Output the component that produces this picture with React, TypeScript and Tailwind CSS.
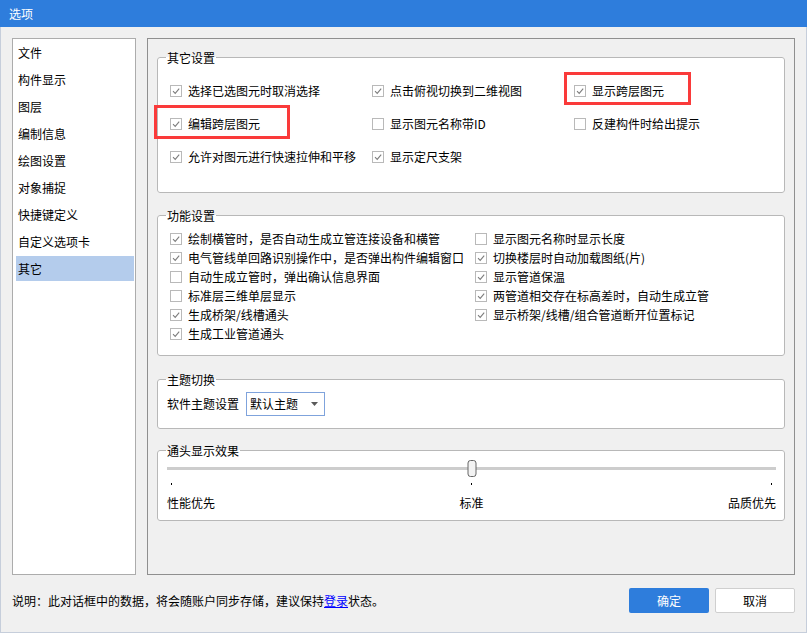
import type { ReactNode } from "react";

const FONT = "font-['Noto_Sans_CJK_SC','Noto_Sans',sans-serif]";

const navItems = [
  "文件",
  "构件显示",
  "图层",
  "编制信息",
  "绘图设置",
  "对象捕捉",
  "快捷键定义",
  "自定义选项卡",
  "其它",
];

type Opt = { label: string; checked: boolean } | null;

const otherRows: Opt[][] = [
  [
    { label: "选择已选图元时取消选择", checked: true },
    { label: "点击俯视切换到二维视图", checked: true },
    { label: "显示跨层图元", checked: true },
  ],
  [
    { label: "编辑跨层图元", checked: true },
    { label: "显示图元名称带ID", checked: false },
    { label: "反建构件时给出提示", checked: false },
  ],
  [
    { label: "允许对图元进行快速拉伸和平移", checked: true },
    { label: "显示定尺支架", checked: true },
    null,
  ],
];

const funcLeft = [
  { label: "绘制横管时，是否自动生成立管连接设备和横管", checked: true },
  { label: "电气管线单回路识别操作中，是否弹出构件编辑窗口", checked: true },
  { label: "自动生成立管时，弹出确认信息界面", checked: false },
  { label: "标准层三维单层显示", checked: false },
  { label: "生成桥架/线槽通头", checked: true },
  { label: "生成工业管道通头", checked: true },
];

const funcRight = [
  { label: "显示图元名称时显示长度", checked: false },
  { label: "切换楼层时自动加载图纸(片)", checked: true },
  { label: "显示管道保温", checked: true },
  { label: "两管道相交存在标高差时，自动生成立管", checked: true },
  { label: "显示桥架/线槽/组合管道断开位置标记", checked: true },
];

// Small windows-style checkbox
const CheckBox = ({ label, checked }: { label: string; checked: boolean }) => (
  <div className="flex items-center gap-[6px] whitespace-nowrap">
    <span className="flex h-[12px] w-[12px] shrink-0 items-center justify-center border border-[#b9b9b9] bg-white">
      {checked && (
        <svg width="10" height="10" viewBox="0 0 10 10">
          <path d="M2 5.2 L4.2 7.4 L8.2 2.6" fill="none" stroke="#7d7d7d" strokeWidth="1.1" />
        </svg>
      )}
    </span>
    <span>{label}</span>
  </div>
);

const GroupBox = ({
  title,
  className,
  children,
}: {
  title: string;
  className?: string;
  children: ReactNode;
}) => (
  <fieldset className={`rounded-[3px] border border-[#b8b8b8] bg-white ${className ?? ""}`}>
    <legend className="ml-[8px] px-[1px] leading-[17px]">{title}</legend>
    {children}
  </fieldset>
);

export default function App() {
  return (
    <div className={`relative flex h-[633px] w-[807px] flex-col bg-[#f0f0f0] text-[12px] text-black ${FONT}`}>
      {/* Title bar */}
      <div className="flex h-[27px] shrink-0 items-center bg-[#2e7ddc] pl-[9px] text-[12px] text-white">
        选项
      </div>

      {/* Body */}
      <div className="flex flex-1 flex-col border-x border-b border-[#c6cedb]">
        <div className="flex gap-[11px] px-[11px] pt-[11px]">
          {/* Sidebar */}
          <div className="flex h-[537px] w-[124px] flex-col gap-[2px] border border-[#acacac] bg-white pl-[3px] pr-[1px] pt-[1px]">
            {navItems.map((item) => (
              <div
                key={item}
                className={`flex h-[25px] items-center pl-[2px] ${item === "其它" ? "bg-[#b4ccec]" : ""}`}
              >
                {item}
              </div>
            ))}
          </div>

          {/* Main panel */}
          <div className="flex h-[537px] w-[648px] flex-col border border-[#8f8f8f] px-[9px] pt-[10px]">
            <GroupBox title="其它设置" className="pb-[25px]">
              <div className="flex flex-col gap-[13px] pl-[12px] pt-[15px]">
                {otherRows.map((row, i) => (
                  <div key={i} className="grid h-[20px] grid-cols-[202px_202px_1fr] items-center">
                    {row.map((opt, j) =>
                      opt ? <CheckBox key={j} label={opt.label} checked={opt.checked} /> : <div key={j} />
                    )}
                  </div>
                ))}
              </div>
            </GroupBox>

            <GroupBox title="功能设置" className="mt-[14px] pb-[12px]">
              <div className="flex pl-[12px] pt-[5px]">
                <div className="flex w-[305px] flex-col">
                  {funcLeft.map((o) => (
                    <div key={o.label} className="flex h-[19px] items-center">
                      <CheckBox label={o.label} checked={o.checked} />
                    </div>
                  ))}
                </div>
                <div className="flex flex-col">
                  {funcRight.map((o) => (
                    <div key={o.label} className="flex h-[19px] items-center">
                      <CheckBox label={o.label} checked={o.checked} />
                    </div>
                  ))}
                </div>
              </div>
            </GroupBox>

            <GroupBox title="主题切换" className="mt-[15px] pb-[12px]">
              <div className="flex items-center gap-[7px] pl-[9px] pt-[4px]">
                <span>软件主题设置</span>
                <div className="flex h-[24px] w-[79px] items-center justify-between border border-[#7fa3dc] bg-white pl-[3px] pr-[6px]">
                  <span>默认主题</span>
                  <svg width="7" height="4" viewBox="0 0 7 4">
                    <path d="M0 0 H7 L3.5 4 Z" fill="#5a5a5a" />
                  </svg>
                </div>
              </div>
            </GroupBox>

            <GroupBox title="通头显示效果" className="mt-[13px] pb-[9px]">
              <div className="pl-[9px] pr-[8px]">
                <div className="relative mt-[1px] flex h-[17px] items-center">
                  <div className="h-[3px] w-full bg-[#cdcdcd]" />
                  <div className="absolute left-1/2 top-0 h-[17px] w-[9px] -translate-x-1/2 rounded-[3px] border border-[#666] bg-[#f3f3f3]" />
                </div>
                <div className="mt-[6px] flex justify-between px-[4px]">
                  <span className="h-[2px] w-px bg-black" />
                  <span className="h-[2px] w-px bg-black" />
                  <span className="h-[2px] w-px bg-black" />
                </div>
                <div className="mt-[9px] flex justify-between leading-[17px]">
                  <span>性能优先</span>
                  <span>标准</span>
                  <span>品质优先</span>
                </div>
              </div>
            </GroupBox>
          </div>
        </div>

        {/* Footer */}
        <div className="flex items-center justify-between pl-[11px] pr-[11px] pt-[13px]">
          <span>
            说明：此对话框中的数据，将会随账户同步存储，建议保持
            <span className="text-[#0000ff] underline">登录</span>
            状态。
          </span>
          <div className="flex gap-[6px]">
            <button className="h-[25px] w-[80px] rounded-[2px] bg-[#2e7ddc] text-white">确定</button>
            <button className="h-[25px] w-[80px] rounded-[2px] border border-[#cfcfcf] bg-white">取消</button>
          </div>
        </div>
      </div>

      {/* Red annotation boxes */}
      <div className="pointer-events-none absolute left-[154px] top-[105px] h-[34px] w-[136px] border-[3px] border-[#fa3a3a]" />
      <div className="pointer-events-none absolute left-[564px] top-[72px] h-[33px] w-[127px] border-[3px] border-[#fa3a3a]" />
    </div>
  );
}
